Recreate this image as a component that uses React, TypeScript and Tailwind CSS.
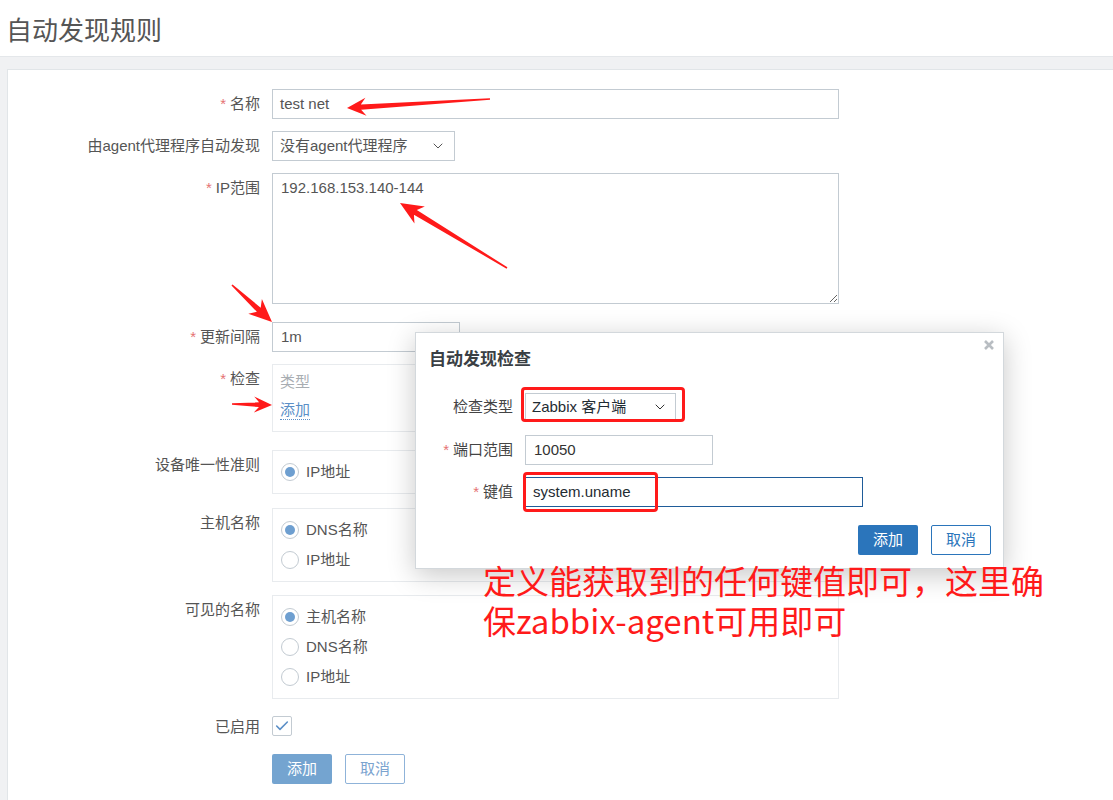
import { ChevronDown, Check } from "lucide-react";

const font = "font-['Liberation_Sans','Noto_Sans_CJK_SC',sans-serif]";

// red screenshot-tool arrows: tail point -> tip
function arrow(tx: number, ty: number, px: number, py: number, L: number, W: number, w: number) {
  const dx = px - tx;
  const dy = py - ty;
  const len = Math.hypot(dx, dy);
  const ux = dx / len;
  const uy = dy / len;
  const nx = -uy;
  const ny = ux;
  const bx = px - ux * L;
  const by = py - uy * L;
  const cx = px - ux * (L + 5);
  const cy = py - uy * (L + 5);
  const pts = [
    [tx + nx * 0.8, ty + ny * 0.8],
    [bx + nx * w, by + ny * w],
    [cx + nx * W, cy + ny * W],
    [px, py],
    [cx - nx * W, cy - ny * W],
    [bx - nx * w, by - ny * w],
    [tx - nx * 0.8, ty - ny * 0.8],
  ];
  return pts.map((p) => p.join(",")).join(" ");
}

function Label({ text, req }: { text: string; req?: boolean }) {
  return (
    <div className="w-[252px] shrink-0 text-right pt-[5px] leading-[20px] text-[15px] text-[#555]">
      {req && <span className="text-[#e57373] mr-[4px]">*</span>}
      {text}
    </div>
  );
}

function Radio({ on, text }: { on?: boolean; text: string }) {
  return (
    <div className="h-[30px] flex items-center gap-[7px]">
      <div className="w-[18px] h-[18px] rounded-full border border-[#c3cbd2] flex items-center justify-center bg-white">
        {on && <div className="w-[10px] h-[10px] rounded-full bg-[#6e9fd0]" />}
      </div>
      <span className="text-[15px] text-[#555]">{text}</span>
    </div>
  );
}

export default function App() {
  return (
    <div className={`relative w-[1113px] h-[800px] overflow-hidden bg-[#f0f1f3] ${font}`}>
      {/* page header */}
      <div className="h-[57px] bg-white border-b border-[#e4e7ea] flex items-center pl-[6px]">
        <h1 className="text-[26px] text-[#555] font-['Noto_Sans_CJK_SC',sans-serif] leading-none mt-[1px]">自动发现规则</h1>
      </div>

      <div className="pt-[12px] pl-[7px]">
        <div className="bg-white border-l border-t border-[#e1e5e8] h-[740px] pt-[19px]">
          {/* 名称 */}
          <div className="flex gap-[12px]">
            <Label text="名称" req />
            <div className="w-[567px] h-[30px] border border-[#c3cbd2] pl-[7px] flex items-center text-[15px] text-[#555]">test net</div>
          </div>

          {/* proxy */}
          <div className="flex gap-[12px] mt-[12px]">
            <Label text="由agent代理程序自动发现" />
            <div className="w-[183px] h-[30px] border border-[#c3cbd2] pl-[7px] pr-[8px] flex items-center justify-between text-[15px] text-[#555]">
              <span>没有agent代理程序</span>
              <ChevronDown size={16} strokeWidth={1.5} className="text-[#555]" />
            </div>
          </div>

          {/* IP范围 */}
          <div className="flex gap-[12px] mt-[12px]">
            <Label text="IP范围" req />
            <textarea
              readOnly
              defaultValue="192.168.153.140-144"
              className="w-[567px] h-[131px] border border-[#c3cbd2] px-[8px] pt-[4px] leading-[20px] text-[15px] text-[#555] outline-none"
            />
          </div>

          {/* 更新间隔 */}
          <div className="flex gap-[12px] mt-[18px]">
            <Label text="更新间隔" req />
            <div className="w-[188px] h-[30px] border border-[#c3cbd2] pl-[8px] flex items-center text-[15px] text-[#555]">1m</div>
          </div>

          {/* 检查 */}
          <div className="flex gap-[12px] mt-[12px]">
            <Label text="检查" req />
            <div className="w-[567px] h-[68px] border border-[#e8ebee] pl-[7px] pt-[3px] text-[15px]">
              <div className="h-[28px] flex items-center text-[#a8adb2]">类型</div>
              <div className="h-[28px] flex items-center">
                <span className="text-[#5b8fc7] border-b border-dotted border-[#5b8fc7] leading-[18px]">添加</span>
              </div>
            </div>
          </div>

          {/* 设备唯一性准则 */}
          <div className="flex gap-[12px] mt-[18px]">
            <Label text="设备唯一性准则" />
            <div className="w-[567px] border border-[#e8ebee] pl-[8px] py-[6px]">
              <Radio on text="IP地址" />
            </div>
          </div>

          {/* 主机名称 */}
          <div className="flex gap-[12px] mt-[14px]">
            <Label text="主机名称" />
            <div className="w-[567px] border border-[#e8ebee] pl-[8px] py-[6px]">
              <Radio on text="DNS名称" />
              <Radio text="IP地址" />
            </div>
          </div>

          {/* 可见的名称 */}
          <div className="flex gap-[12px] mt-[13px]">
            <Label text="可见的名称" />
            <div className="w-[567px] border border-[#e8ebee] pl-[8px] py-[6px]">
              <Radio on text="主机名称" />
              <Radio text="DNS名称" />
              <Radio text="IP地址" />
            </div>
          </div>

          {/* 已启用 */}
          <div className="flex gap-[12px] mt-[13px]">
            <Label text="已启用" />
            <div className="pt-[4px]">
              <div className="w-[20px] h-[20px] border border-[#c3cbd2] rounded-[2px] flex items-center justify-center">
                <Check size={16} strokeWidth={2.4} className="text-[#5b8fc7]" />
              </div>
            </div>
          </div>

          {/* buttons */}
          <div className="flex gap-[13px] mt-[17px] pl-[264px]">
            <div className="w-[60px] h-[30px] rounded-[2px] bg-[#74a4d0] text-white text-[15px] flex items-center justify-center">添加</div>
            <div className="w-[60px] h-[30px] rounded-[2px] border border-[#8fb3d9] text-[#7ba3cf] text-[15px] flex items-center justify-center">取消</div>
          </div>
        </div>
      </div>

      {/* dialog */}
      <div className="absolute left-[415px] top-[332px] w-[589px] h-[237px] bg-white border border-[#d3d8dc] shadow-[0_6px_26px_rgba(0,0,0,0.22)]">
        <svg className="absolute right-[9px] top-[7px]" width="10" height="10" viewBox="0 0 10 10">
          <path d="M1 1L9 9M9 1L1 9" stroke="#b8bdc2" strokeWidth="2.6" />
        </svg>
        <div className="pl-[13px] pt-[14px] text-[17px] leading-[22px] font-bold text-[#3a3f44] font-['Noto_Sans_CJK_SC',sans-serif]">自动发现检查</div>

        <div className="flex gap-[12px] mt-[24px]">
          <div className="w-[97px] text-right pt-[4px] leading-[20px] text-[15px] text-[#444]">检查类型</div>
          <div className="w-[151px] h-[28px] border border-[#c3cbd2] pl-[6px] pr-[7px] flex items-center justify-between text-[15px] text-[#1f2c33]">
            <span>Zabbix 客户端</span>
            <ChevronDown size={16} strokeWidth={1.5} className="text-[#333]" />
          </div>
        </div>

        <div className="flex gap-[12px] mt-[14px]">
          <div className="w-[97px] text-right pt-[5px] leading-[20px] text-[15px] text-[#444]">
            <span className="text-[#e57373] mr-[4px]">*</span>端口范围
          </div>
          <div className="w-[188px] h-[30px] border border-[#c3cbd2] pl-[8px] flex items-center text-[15px] text-[#333]">10050</div>
        </div>

        <div className="flex gap-[12px] mt-[12px]">
          <div className="w-[97px] text-right pt-[5px] leading-[20px] text-[15px] text-[#444]">
            <span className="text-[#e57373] mr-[4px]">*</span>键值
          </div>
          <div className="w-[338px] h-[30px] border border-[#1f5c99] pl-[7px] flex items-center text-[15px] text-[#1f2c33]">system.uname</div>
        </div>

        <div className="flex justify-end gap-[13px] mt-[18px] pr-[12px]">
          <div className="w-[60px] h-[30px] rounded-[2px] bg-[#2b75bb] text-white text-[15px] flex items-center justify-center">添加</div>
          <div className="w-[60px] h-[30px] rounded-[2px] border border-[#2b75bb] text-[#2b75bb] text-[15px] flex items-center justify-center">取消</div>
        </div>
      </div>

      {/* annotations */}
      <div className="absolute left-[521px] top-[387px] w-[164px] h-[35px] border-[3px] border-[#ff1a1a] rounded-[4px]" />
      <div className="absolute left-[523px] top-[472px] w-[135px] h-[40px] border-[3px] border-[#ff1a1a] rounded-[4px]" />

      <div className="absolute left-[483px] top-[560px] text-[33px] leading-[40px] text-[#ff1a1a] font-['Noto_Sans_CJK_SC',sans-serif] whitespace-nowrap">
        <div>定义能获取到的任何键值即可，这里确</div>
        <div>保zabbix-agent可用即可</div>
      </div>

      <svg className="absolute inset-0 pointer-events-none" width="1113" height="800">
        <polygon points={arrow(490, 99, 347, 108, 14, 9, 2.6)} fill="#ff1a1a" />
        <polygon points={arrow(507, 268, 400, 203, 18, 10, 2.8)} fill="#ff1a1a" />
        <polygon points={arrow(232, 285, 272, 322, 18, 10, 2.8)} fill="#ff1a1a" />
        <polygon points={arrow(232, 404, 272, 405, 13, 8, 2.4)} fill="#ff1a1a" />
      </svg>
    </div>
  );
}
